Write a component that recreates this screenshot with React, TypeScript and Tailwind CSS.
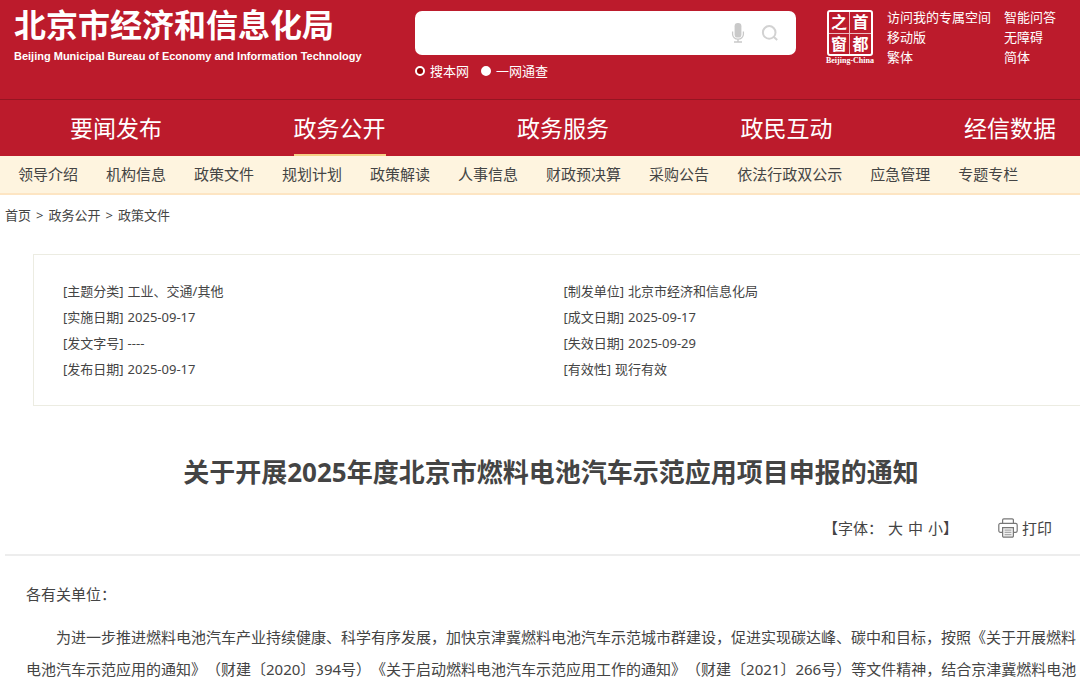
const NAV = ['要闻发布', '政务公开', '政务服务', '政民互动', '经信数据']

const SUB_NAV = [
  '领导介绍',
  '机构信息',
  '政策文件',
  '规划计划',
  '政策解读',
  '人事信息',
  '财政预决算',
  '采购公告',
  '依法行政双公示',
  '应急管理',
  '专题专栏',
]

const CRUMBS = ['首页', '政务公开', '政策文件']

const DETAILS = [
  ['主题分类', '工业、交通/其他'],
  ['制发单位', '北京市经济和信息化局'],
  ['实施日期', '2025-09-17'],
  ['成文日期', '2025-09-17'],
  ['发文字号', '----'],
  ['失效日期', '2025-09-29'],
  ['发布日期', '2025-09-17'],
  ['有效性', '现行有效'],
]

function MicIcon() {
  return (
    <svg width="14" height="20" viewBox="0 0 14 20" fill="none" aria-hidden="true">
      <rect x="3.6" y="0" width="6.8" height="14.6" rx="3.2" fill="#c9c9c9" />
      <path d="M1.6 8.5v2.700a5.400 5 0 0 0 10.800 0V8.500" stroke="#c9c9c9" strokeWidth="1.300" />
      <path d="M7 16.300v2.400M3 19h8" stroke="#c9c9c9" strokeWidth="1.400" />
    </svg>
  )
}

function SearchIcon() {
  return (
    <svg width="18" height="16" viewBox="0 0 18 16" fill="none" stroke="#d2d2d2" strokeWidth="2" aria-hidden="true">
      <circle cx="8.200" cy="7.400" r="6.300" />
      <path d="M12.600 11.800l3.600 3.200" />
    </svg>
  )
}

function PrintIcon() {
  return (
    <svg width="20" height="20" viewBox="0 0 20 20" fill="none" stroke="#777" strokeWidth="1.200" aria-hidden="true">
      <path d="M4.600 5.400V2a1.200 1.200 0 0 1 1.200-1.200h8.400A1.200 1.200 0 0 1 15.400 2v3.400" />
      <path d="M4.400 14.400H2.400a1.600 1.600 0 0 1-1.600-1.600V7a1.600 1.600 0 0 1 1.600-1.600h15.200A1.600 1.600 0 0 1 19.200 7v5.800a1.600 1.600 0 0 1-1.600 1.600h-2" />
      <path d="M4.600 9.600h10.800v8.300a1.200 1.200 0 0 1-1.200 1.200H5.800a1.200 1.200 0 0 1-1.200-1.200z" fill="#f2f2f2" />
      <path d="M6.600 12.200h6.800M6.600 14.400h6.800M6.600 16.600h6.800" stroke="#aaa" />
    </svg>
  )
}

function CapitalWindow() {
  return (
    <a href="#" className="flex w-[50px] shrink-0 flex-col items-center text-white">
      <span className="grid h-[46px] w-[46px] grid-cols-2 rounded-[3px] border-2 border-white text-center text-[16px] leading-[20px] font-semibold">
        <span className="border-r border-b border-white/70">之</span>
        <span className="border-b border-white/70">首</span>
        <span className="border-r border-white/70">窗</span>
        <span>都</span>
      </span>
      <span className="font-['Liberation_Serif',serif] text-[8px] leading-[10px] font-bold whitespace-nowrap">Beijing-China</span>
    </a>
  )
}

function Header() {
  return (
    <header className="flex h-[99px] items-start bg-[#bc1b2c] pr-[24px] pl-[14px] text-white">
      <div className="w-[401px] shrink-0 pt-[5px]">
        <div className="text-[32px] leading-[40px] font-bold whitespace-nowrap">北京市经济和信息化局</div>
        <div className="font-['Liberation_Sans',sans-serif] text-[11px] leading-[22px] font-bold whitespace-nowrap">
          Beijing Municipal Bureau of Economy and Information Technology
        </div>
      </div>

      <form className="flex-1 pt-[11px]">
        <div className="flex h-[44px] items-center gap-[16px] rounded-[7px] bg-white pr-[17px]">
          <input type="text" aria-label="搜索" className="h-full min-w-0 flex-1 bg-transparent pl-3 text-[15px] text-gray-700 outline-none" />
          <button type="button" aria-label="语音">
            <MicIcon />
          </button>
          <button type="button" aria-label="搜索">
            <SearchIcon />
          </button>
        </div>
        <div className="mt-[6px] flex gap-[12px] text-[13px] leading-[20px]">
          <label className="flex items-center gap-[5px]">
            <input
              type="radio"
              name="scope"
              className="h-[10px] w-[10px] appearance-none rounded-full border-2 border-white bg-white checked:bg-[#8b0000]"
              defaultChecked
            />
            搜本网
          </label>
          <label className="flex items-center gap-[5px]">
            <input
              type="radio"
              name="scope"
              className="h-[10px] w-[10px] appearance-none rounded-full border-2 border-white bg-white checked:bg-[#8b0000]"
            />
            一网通查
          </label>
        </div>
      </form>

      <div className="ml-[29px] flex pt-[10px]">
        <CapitalWindow />
        <div className="-mt-[3px] ml-[12px] grid grid-cols-[auto_auto] gap-x-[13px] text-[13px] leading-[20px] whitespace-nowrap">
          <a href="#">访问我的专属空间</a>
          <a href="#">智能问答</a>
          <a href="#">移动版</a>
          <a href="#">无障碍</a>
          <a href="#">繁体</a>
          <a href="#">简体</a>
        </div>
      </div>
    </header>
  )
}

function Nav() {
  return (
    <>
      <nav className="flex h-[57px] justify-between border-t border-[#951522] bg-[#bc1b2c] pr-[24px] pl-[70px] text-[23px] leading-[56px] text-white">
        {NAV.map((item) => (
          <a
            key={item}
            href="#"
            className={item === '政务公开' ? 'border-b-2 border-[#f6cf85] whitespace-nowrap' : 'whitespace-nowrap'}
          >
            {item}
          </a>
        ))}
      </nav>
      <nav className="flex h-[39px] gap-[28px] border-b-2 border-[#fde5c3] bg-[#fef4df] pl-[18px] text-[15px] leading-[37px] whitespace-nowrap">
        {SUB_NAV.map((item) => (
          <a key={item} href="#">
            {item}
          </a>
        ))}
      </nav>
    </>
  )
}

export default function App() {
  return (
    <div className="overflow-x-hidden bg-white font-['Noto_Sans','Noto_Sans_CJK_SC',sans-serif] text-[#444] [text-spacing-trim:space-all]" lang="zh-CN">
      <Header />
      <Nav />

      <main className="pl-[5px]">
        <div className="flex gap-[5px] text-[13px] leading-[40px]">
          {CRUMBS.map((crumb, i) => (
            <span key={crumb} className="flex gap-[5px]">
              {i > 0 && <span>&gt;</span>}
              <a href="#">{crumb}</a>
            </span>
          ))}
        </div>

        <dl className="mt-[19px] ml-[28px] grid grid-cols-2 border-y border-l border-[#ecece2] py-[23px] pr-[16px] pl-[29px] text-[13px] leading-[26px]">
          {DETAILS.map(([label, value]) => (
            <div key={label} className="flex gap-[4px]">
              <dt>[{label}]</dt>
              <dd>{value}</dd>
            </div>
          ))}
        </dl>

        <h1 className="mt-[46px] pl-[17px] text-center text-[26px] leading-[40px] font-bold">
          关于开展2025年度北京市燃料电池汽车示范应用项目申报的通知
        </h1>

        <div className="mt-[24px] flex justify-end gap-[40px] border-b-2 border-[#ededed] pr-[28px] pb-[14px] text-[15px] leading-[24px]">
          <div className="flex">
            <span className="mr-[5px]">【字体：</span>
            <span className="flex gap-[5px]">
              <button type="button">大</button>
              <button type="button">中</button>
              <button type="button">小</button>
            </span>
            <span>】</span>
          </div>
          <button type="button" className="flex items-center gap-[4px]">
            <PrintIcon />
            打印
          </button>
        </div>

        <article className="mt-[22px] pl-[21px] text-[15px] leading-[32px]">
          <p>各有关单位：</p>
          <p className="mt-[11px] indent-[30px]">
            为进一步推进燃料电池汽车产业持续健康、科学有序发展，加快京津冀燃料电池汽车示范城市群建设，促进实现碳达峰、碳中和目标，按照《关于开展燃料电池汽车示范应用的通知》（财建〔2020〕394号）《关于启动燃料电池汽车示范应用工作的通知》（财建〔2021〕266号）等文件精神，结合京津冀燃料电池
          </p>
        </article>
      </main>
    </div>
  )
}
